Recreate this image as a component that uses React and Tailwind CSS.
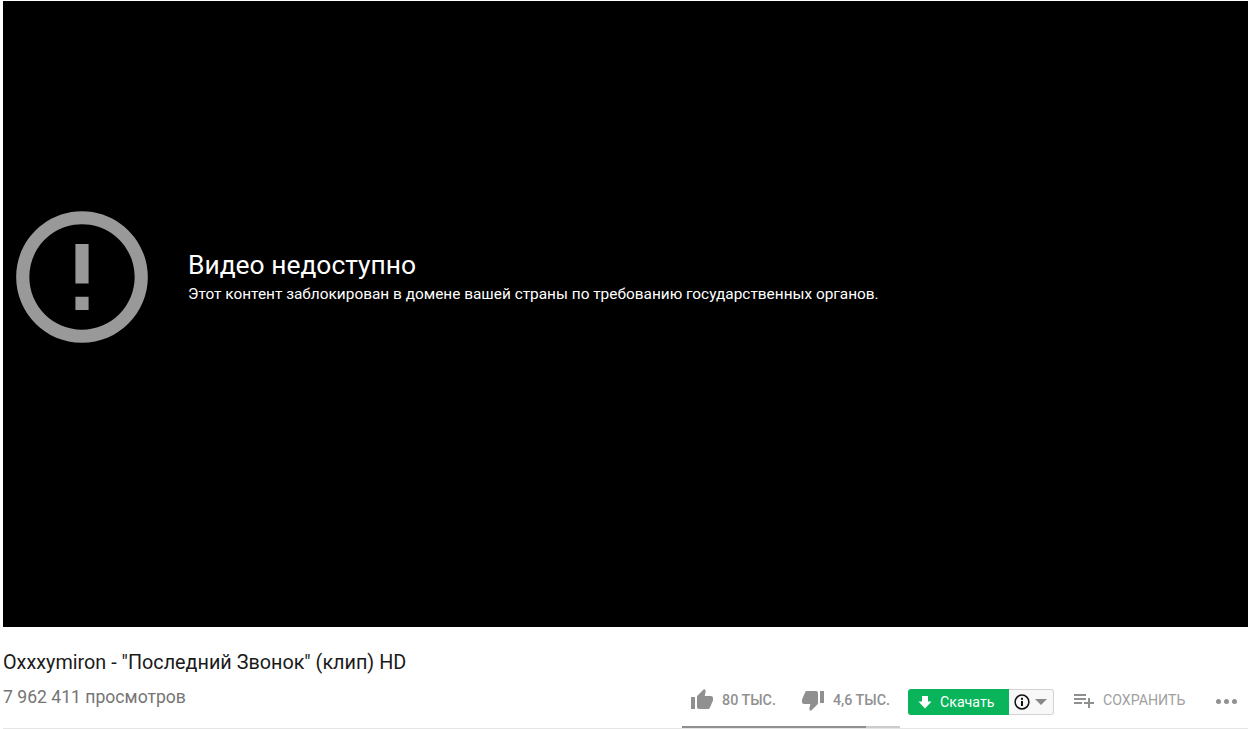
const font = { fontFamily: '"Roboto", "Liberation Sans", sans-serif' };

function Icon({ d, className }) {
  return (
    <svg viewBox="0 0 24 24" className={className} fill="currentColor" aria-hidden="true">
      <path d={d} />
    </svg>
  );
}

const UP = "M1 21h4V9H1v12zm22-11c0-1.1-.9-2-2-2h-6.31l.95-4.57.03-.32c0-.41-.17-.79-.44-1.06L14.17 1 7.59 7.59C7.22 7.95 7 8.45 7 9v10c0 1.1.9 2 2 2h9c.83 0 1.54-.5 1.84-1.22l3.02-7.05c.09-.23.14-.47.14-.73v-1.91l-.01-.01L23 10z";
const DOWN = "M15 3H6c-.83 0-1.54.5-1.84 1.22l-3.02 7.05c-.09.23-.14.47-.14.73v1.91l.01.01L1 14c0 1.1.9 2 2 2h6.31l-.95 4.57-.03.32c0 .41.17.79.44 1.06L9.83 23l6.59-6.59c.36-.36.58-.86.58-1.41V5c0-1.1-.9-2-2-2zm4 0v12h4V3h-4z";
const ADD = "M14 10H2v2h12v-2zm0-4H2v2h12V6zm4 8v-4h-2v4h-4v2h4v4h2v-4h4v-2h-4zM2 16h8v-2H2v2z";
const ERR = "M11 15h2v2h-2zm0-8h2v6h-2zm.99-5C6.47 2 2 6.48 2 12s4.47 10 9.99 10C17.52 22 22 17.52 22 12S17.52 2 11.99 2zM12 20c-4.42 0-8-3.58-8-8s3.58-8 8-8 8 3.58 8 8-3.58 8-8 8z";

export default function App() {
  return (
    <div style={font} className="w-[1250px] h-[729px] overflow-hidden bg-white pl-[3px] pr-[2px] pt-px flex flex-col">
      <div className="h-[626px] bg-black flex items-start pt-[197px] text-white">
        <Icon d={ERR} className="w-[158px] h-[158px] text-[#999999] shrink-0" />
        <div className="ml-[27px] pt-[51px]">
          <div className="text-[26.4px] leading-[32px]">Видео недоступно</div>
          <div className="text-[15.4px] leading-[20px] font-normal mt-[3px]">
            Этот контент заблокирован в домене вашей страны по требованию государственных органов.
          </div>
        </div>
      </div>

      <div className="flex-1 flex flex-col">
        <h1 className="pt-[24px] text-[19.8px] leading-[24px] font-normal text-[#1a1a1a]">
          Oxxxymiron - "Последний Звонок" (клип) HD
        </h1>
        <div className="flex-1 flex justify-between border-b border-[#e5e5e5]">
          <div className="pt-[10px] text-[17.6px] leading-[24px] text-[#757575]">7 962 411 просмотров</div>
          <div className="flex items-start -mt-px">
            <div className="w-[218px] h-[54px] flex flex-col">
              <div className="flex-1 flex items-start pt-[14px] pl-2 text-[14.3px] font-medium text-[#909090]">
                <Icon d={UP} className="w-6 h-6 shrink-0" />
                <span className="ml-2 leading-6">80 ТЫС.</span>
                <Icon d={DOWN} className="w-6 h-6 ml-[25px] shrink-0" />
                <span className="ml-2 leading-6">4,6 ТЫС.</span>
              </div>
              <div className="h-[2px] bg-[#cccccc] flex">
                <div className="w-[184px] bg-[#909090]" />
              </div>
            </div>
            <div className="ml-2 mt-[15px] h-[26px] w-[146px] flex text-[14.2px]">
              <div className="w-[101px] bg-[#0ab45a] rounded-l-[3px] flex items-center pl-[10px] text-white">
                <svg viewBox="0 0 14 14" className="w-[14px] h-[14px]" fill="currentColor" aria-hidden="true">
                  <path d="M4 1h6v5.5h3.5L7 13.5.5 6.5H4z" />
                </svg>
                <span className="ml-[8px] leading-5">Скачать</span>
              </div>
              <div className="flex-1 bg-[#f8f8f8] border border-l-0 border-[#d3d3d3] rounded-r-[3px] flex items-center pl-[5px]">
                <svg viewBox="0 0 16 16" className="w-4 h-4 text-[#111111]" fill="none" aria-hidden="true">
                  <circle cx="8" cy="8" r="6.9" stroke="currentColor" strokeWidth="1.5" />
                  <rect x="7" y="7" width="2" height="5" fill="currentColor" />
                  <rect x="7" y="3.8" width="2" height="2" fill="currentColor" />
                </svg>
                <div className="ml-[5px] w-0 h-0 border-x-[6px] border-x-transparent border-t-[6px] border-t-[#888888]" />
              </div>
            </div>
            <div className="ml-[18px] mt-[14px] flex items-start text-[#a0a0a0] text-[14.2px]">
              <Icon d={ADD} className="w-6 h-6 text-[#909090] shrink-0" />
              <span className="ml-[7px] leading-6 w-[83px] whitespace-nowrap">СОХРАНИТЬ</span>
            </div>
            <div className="ml-[30px] mr-[11px] mt-[25px] flex gap-[3px]">
              <div className="w-[5px] h-[5px] rounded-full bg-[#909090]" />
              <div className="w-[5px] h-[5px] rounded-full bg-[#909090]" />
              <div className="w-[5px] h-[5px] rounded-full bg-[#909090]" />
            </div>
          </div>
        </div>
      </div>
    </div>
  );
}
